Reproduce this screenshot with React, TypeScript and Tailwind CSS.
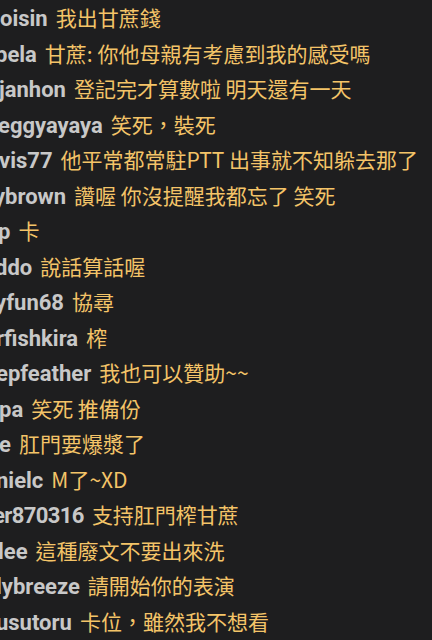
import React from "react";

type Chat = { user: string; msg: string; shift: string };

const chats: Chat[] = [
  { user: "oisin", msg: "我出甘蔗錢", shift: "ml-0" },
  { user: "bela", msg: "甘蔗: 你他母親有考慮到我的感受嗎", shift: "-ml-[5px]" },
  { user: "janhon", msg: "登記完才算數啦 明天還有一天", shift: "-ml-[1px]" },
  { user: "eggyayaya", msg: "笑死，裝死", shift: "-ml-[2px]" },
  { user: "vis77", msg: "他平常都常駐PTT 出事就不知躲去那了", shift: "-ml-[1px]" },
  { user: "ybrown", msg: "讚喔 你沒提醒我都忘了 笑死", shift: "-ml-[6px]" },
  { user: "p", msg: "卡", shift: "-ml-[2px]" },
  { user: "ddo", msg: "說話算話喔", shift: "-ml-[5px]" },
  { user: "yfun68", msg: "協尋", shift: "-ml-[5px]" },
  { user: "rfishkira", msg: "榨", shift: "-ml-[4px]" },
  { user: "epfeather", msg: "我也可以贊助~~", shift: "-ml-[4px]" },
  { user: "pa", msg: "笑死 推備份", shift: "-ml-[1px]" },
  { user: "e", msg: "肛門要爆漿了", shift: "-ml-[1px]" },
  { user: "nielc", msg: "M了~XD", shift: "-ml-[4px]" },
  { user: "er870316", msg: "支持肛門榨甘蔗", shift: "-ml-[7px] tracking-[-0.6px]" },
  { user: "lee", msg: "這種廢文不要出來洗", shift: "-ml-[2px]" },
  { user: "lybreeze", msg: "請開始你的表演", shift: "-ml-[4px]" },
  { user: "usutoru", msg: "卡位，雖然我不想看", shift: "-ml-[4px]" },
];

export default function App() {
  return (
    <div lang="zh-Hant-TW" className="w-[432px] h-[640px] overflow-hidden bg-[#1e1e1f]">
      <div className="flex flex-col pt-[1px]">
        {chats.map((c, i) => (
          <div key={i} className="h-[35.5px] flex items-center whitespace-nowrap">
            <div className={`flex items-baseline gap-[8px] ${c.shift}`}>
              <span className="text-[22px] font-bold text-[#c8c8c8] font-['Roboto',sans-serif]">
                {c.user}
              </span>
              <span className="text-[21px] tracking-normal text-[#f4c468] font-['Noto_Sans_CJK_TC','Noto_Sans',sans-serif] leading-none">
                {c.msg}
              </span>
            </div>
          </div>
        ))}
      </div>
    </div>
  );
}
